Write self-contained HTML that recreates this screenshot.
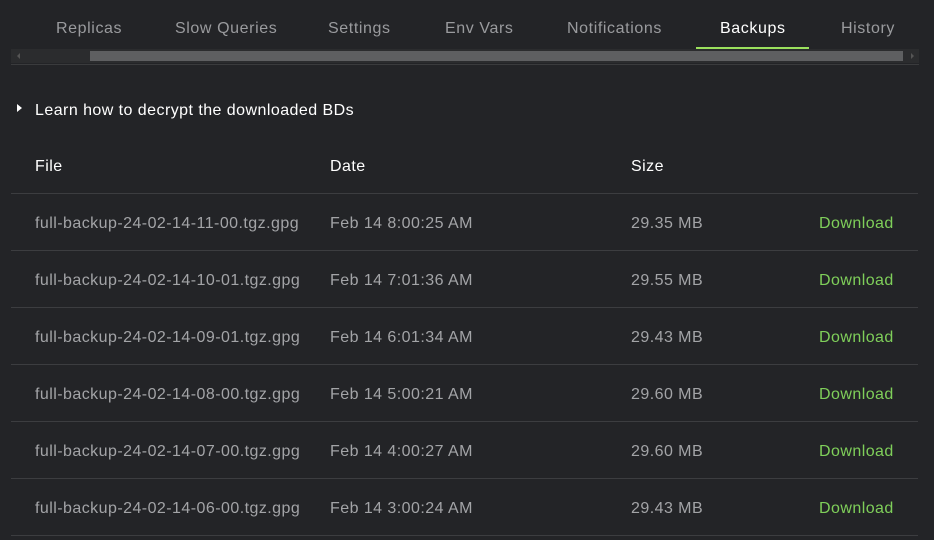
<!DOCTYPE html>
<html><head><meta charset="utf-8"><style>
html,body{margin:0;padding:0;background:#232427;width:934px;height:540px;overflow:hidden;font-family:"Liberation Sans",sans-serif;}
.t{position:absolute;white-space:nowrap;}
.tab{top:20px;font-size:16px;color:#9a9b9e;letter-spacing:0.6px;}
.hl{position:absolute;left:11px;width:907px;height:1px;background:#3c3d40;}
.c{position:absolute;font-size:16px;color:#a3a4a7;white-space:nowrap;letter-spacing:0.45px;}
.dl{color:#7fcf5a;}
</style></head><body>
<div class="t tab" style="left:56px">Replicas</div>
<div class="t tab" style="left:175px">Slow Queries</div>
<div class="t tab" style="left:328px">Settings</div>
<div class="t tab" style="left:445px">Env Vars</div>
<div class="t tab" style="left:567px">Notifications</div>
<div class="t tab" style="left:720px;color:#fff">Backups</div>
<div class="t tab" style="left:841px">History</div>
<div style="position:absolute;left:696px;top:47px;width:113px;height:2px;background:#9be15d"></div>
<div style="position:absolute;left:11px;top:49px;width:908px;height:14px;background:#2b2c2e"></div>
<div style="position:absolute;left:90px;top:51px;width:813px;height:10px;background:#5e5f61"></div>
<div style="position:absolute;left:17px;top:53px;width:0;height:0;border-top:3px solid transparent;border-bottom:3px solid transparent;border-right:3px solid #555"></div>
<div style="position:absolute;left:911px;top:53px;width:0;height:0;border-top:3px solid transparent;border-bottom:3px solid transparent;border-left:3px solid #555"></div>
<div style="position:absolute;left:11px;top:64px;width:908px;height:1px;background:#3a3b3d"></div>
<div style="position:absolute;left:17px;top:104px;width:0;height:0;border-top:4px solid transparent;border-bottom:4px solid transparent;border-left:5px solid #fff"></div>
<div class="t" style="left:35px;top:102px;font-size:16px;color:#fff;letter-spacing:0.45px">Learn how to decrypt the downloaded BDs</div>
<div class="c" style="left:35px;top:158px;color:#fff">File</div>
<div class="c" style="left:330px;top:158px;color:#fff">Date</div>
<div class="c" style="left:631px;top:158px;color:#fff">Size</div>
<div class="hl" style="top:193px"></div>
<div id="rows"></div>
<script>
var d=[["11-00","8:00:25","29.35"],["10-01","7:01:36","29.55"],["09-01","6:01:34","29.43"],["08-00","5:00:21","29.60"],["07-00","4:00:27","29.60"],["06-00","3:00:24","29.43"]];
var h="";d.forEach(function(r,i){var y=193+57*i;
h+='<div class="c" style="left:35px;top:'+(y+22)+'px">full-backup-24-02-14-'+r[0]+'.tgz.gpg</div>';
h+='<div class="c" style="left:330px;top:'+(y+22)+'px">Feb 14 '+r[1]+' AM</div>';
h+='<div class="c" style="left:631px;top:'+(y+22)+'px">'+r[2]+' MB</div>';
h+='<div class="c dl" style="left:819px;top:'+(y+22)+'px">Download</div>';
h+='<div class="hl" style="top:'+(y+57)+'px"></div>';});
document.getElementById("rows").innerHTML=h;
</script>
</body></html>
